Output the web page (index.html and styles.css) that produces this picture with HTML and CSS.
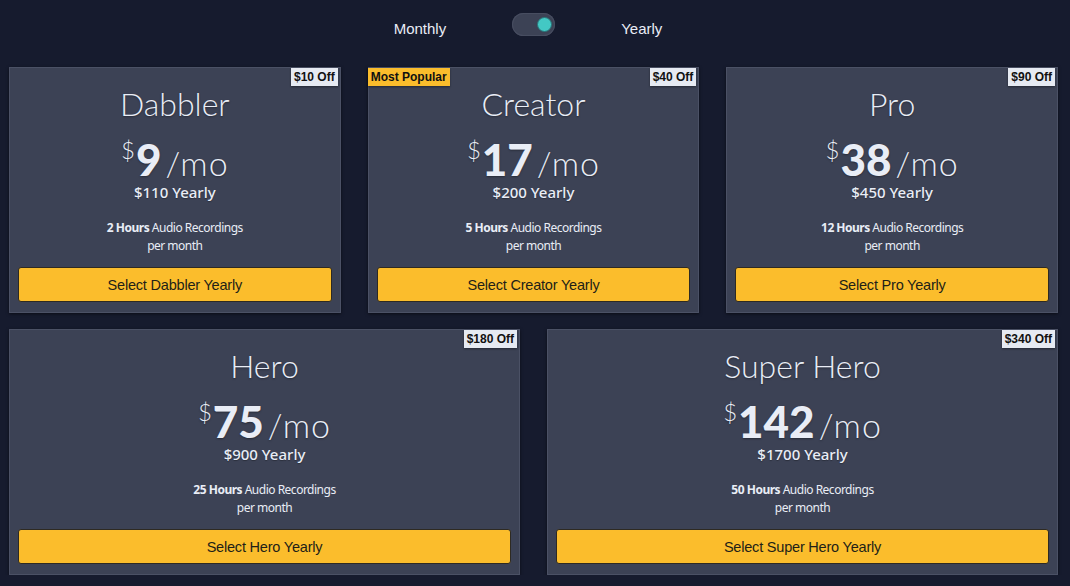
FILE: index.html
```html
<!DOCTYPE html>
<html lang="en">
<head>
  <meta charset="UTF-8">
  <meta name="viewport" content="width=device-width, initial-scale=1.0">
  <title>Pricing</title>
  <link rel="stylesheet" href="styles.css">
</head>
<body>
  <div class="billing-switch">
    <span class="switch-label">Monthly</span>
    <div class="toggle on"><span class="knob"></span></div>
    <span class="switch-label">Yearly</span>
  </div>

  <div class="plans">
    <div class="plan-row three">
      <div class="plan">
        <span class="badge off">$10 Off</span>
        <h2 class="plan-name">Dabbler</h2>
        <div class="price"><span class="currency">$</span><span class="amount">9</span><span class="per">/mo</span></div>
        <div class="yearly">$110 Yearly</div>
        <p class="features"><strong>2 Hours</strong> Audio Recordings<br>per month</p>
        <button type="button">Select Dabbler Yearly</button>
      </div>
      <div class="plan">
        <span class="badge popular">Most Popular</span>
        <span class="badge off">$40 Off</span>
        <h2 class="plan-name">Creator</h2>
        <div class="price"><span class="currency">$</span><span class="amount">17</span><span class="per">/mo</span></div>
        <div class="yearly">$200 Yearly</div>
        <p class="features"><strong>5 Hours</strong> Audio Recordings<br>per month</p>
        <button type="button">Select Creator Yearly</button>
      </div>
      <div class="plan">
        <span class="badge off">$90 Off</span>
        <h2 class="plan-name">Pro</h2>
        <div class="price"><span class="currency">$</span><span class="amount">38</span><span class="per">/mo</span></div>
        <div class="yearly">$450 Yearly</div>
        <p class="features"><strong>12 Hours</strong> Audio Recordings<br>per month</p>
        <button type="button">Select Pro Yearly</button>
      </div>
    </div>

    <div class="plan-row two">
      <div class="plan">
        <span class="badge off">$180 Off</span>
        <h2 class="plan-name">Hero</h2>
        <div class="price"><span class="currency">$</span><span class="amount">75</span><span class="per">/mo</span></div>
        <div class="yearly">$900 Yearly</div>
        <p class="features"><strong>25 Hours</strong> Audio Recordings<br>per month</p>
        <button type="button">Select Hero Yearly</button>
      </div>
      <div class="plan">
        <span class="badge off">$340 Off</span>
        <h2 class="plan-name">Super Hero</h2>
        <div class="price"><span class="currency">$</span><span class="amount">142</span><span class="per">/mo</span></div>
        <div class="yearly">$1700 Yearly</div>
        <p class="features"><strong>50 Hours</strong> Audio Recordings<br>per month</p>
        <button type="button">Select Super Hero Yearly</button>
      </div>
    </div>
  </div>
</body>
</html>
```

FILE: styles.css
```css
body {
  margin: 0;
  background-color: #161b2e;
  color: #e9edf6;
  font-family: "Liberation Sans", Arial, sans-serif;
}
.billing-switch {
  height: 67px;
  display: flex;
  justify-content: center;
  align-items: flex-start;
  gap: 66px;
  box-sizing: border-box;
  padding-top: 13px;
  padding-right: 14px;
}
.switch-label {
  font-size: 15px;
  line-height: 17px;
  padding-top: 7px;
}
.toggle {
  width: 43px;
  height: 23px;
  border-radius: 12px;
  background-color: #3c4255;
  box-shadow: inset 0 0 0 1px #474d60;
  display: flex;
  align-items: center;
  justify-content: flex-end;
  padding: 0 3px;
  box-sizing: border-box;
}
.knob {
  width: 13px;
  height: 13px;
  border-radius: 50%;
  background-color: #43c8c4;
  border: 1.5px solid #2a7377;
}
.plans {
  padding: 0 12px 0 9px;
  display: flex;
  flex-direction: column;
  gap: 16px;
}
.plan-row {
  display: grid;
  gap: 27px;
}
.plan-row.three {
  grid-template-columns: repeat(3, 1fr);
}
.plan-row.two {
  grid-template-columns: repeat(2, 1fr);
}
.plan {
  position: relative;
  background-color: #3c4255;
  border: 1px solid #4b5165;
  box-shadow: 0 1px 3px rgba(0, 0, 0, 0.55);
  padding: 17px 8px 10px;
  text-align: center;
}
.badge {
  position: absolute;
  top: 0;
  font-size: 12px;
  font-weight: bold;
  line-height: 18px;
  padding: 0 3px;
  color: #111;
  box-shadow: 0 1px 2px rgba(0, 0, 0, 0.4);
}
.badge.off {
  right: 2px;
  background-color: #e6eaf2;
}
.badge.popular {
  left: -1px;
  background-color: #fbbd2c;
}
.plan-name {
  margin: 0;
  font-family: Lato, sans-serif;
  font-weight: 300;
  font-size: 32px;
  line-height: 38px;
  text-shadow: 0 1px 2px rgba(0, 0, 0, 0.35);
}
.price {
  margin-top: 17px;
  font-family: Lato, sans-serif;
  font-size: 44px;
  line-height: 38px;
  text-shadow: 0 1px 2px rgba(0, 0, 0, 0.35);
}
.currency {
  font-size: 24px;
  font-weight: 300;
  line-height: 0;
  vertical-align: 17px;
  margin-right: 1px;
}
.amount {
  font-size: 44px;
  font-weight: 900;
  margin-right: 4px;
}
.per {
  font-size: 34px;
  font-weight: 300;
  letter-spacing: 1px;
}
.yearly {
  font-family: "Noto Sans", sans-serif;
  font-size: 15px;
  font-weight: 500;
  line-height: 20px;
  text-shadow: 0 1px 1px rgba(0, 0, 0, 0.3);
}
.features {
  margin: 17px 0 0;
  font-family: "Noto Sans", sans-serif;
  font-size: 12px;
  line-height: 18px;
  letter-spacing: -0.5px;
}
.features strong {
  font-weight: bold;
}
button {
  display: block;
  width: 100%;
  height: 35px;
  margin-top: 12px;
  background-color: #fbbd2c;
  color: #221f18;
  border: 1px solid #2e2a22;
  border-radius: 3px;
  font-family: "Liberation Sans", Arial, sans-serif;
  font-size: 14.5px;
  letter-spacing: -0.2px;
  cursor: pointer;
}
```
